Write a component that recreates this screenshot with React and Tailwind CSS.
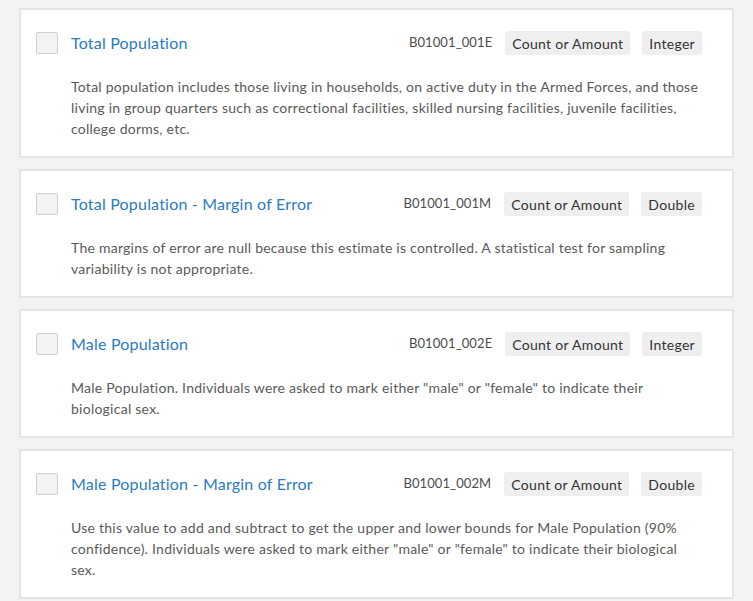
import React from 'react';

const fields = [
  {
    title: 'Total Population',
    id: 'B01001_001E',
    type: 'Integer',
    desc: 'Total population includes those living in households, on active duty in the Armed Forces, and those living in group quarters such as correctional facilities, skilled nursing facilities, juvenile facilities, college dorms, etc.',
  },
  {
    title: 'Total Population - Margin of Error',
    id: 'B01001_001M',
    type: 'Double',
    desc: 'The margins of error are null because this estimate is controlled. A statistical test for sampling variability is not appropriate.',
  },
  {
    title: 'Male Population',
    id: 'B01001_002E',
    type: 'Integer',
    desc: 'Male Population. Individuals were asked to mark either "male" or "female" to indicate their biological sex.',
  },
  {
    title: 'Male Population - Margin of Error',
    id: 'B01001_002M',
    type: 'Double',
    desc: 'Use this value to add and subtract to get the upper and lower bounds for Male Population (90% confidence). Individuals were asked to mark either "male" or "female" to indicate their biological sex.',
  },
];

const FieldCard = ({ field }) => {
  return (
    <div className="bg-white border-2 border-[#e4e4e4] pl-[15px] pr-[30px] pt-[21px] pb-[17px]">
      <div className="flex items-center">
        <div className="w-[22px] h-[22px] shrink-0 rounded-[2px] border border-[#cfcfcf] bg-[#f3f3f3]" />
        <div className="ml-[13px] flex-1 text-[16px] tracking-[0.2px] text-[#2c7bc2]">{field.title}</div>
        <div className="text-[13px] text-[#4c4c4c] tracking-[0.1px]">{field.id}</div>
        <div className="ml-[13px] h-[24px] px-[7px] flex items-center rounded-[3px] bg-[#efefef] text-[14px] tracking-[0.3px] text-[#333]">
          Count or Amount
        </div>
        <div className="ml-[12px] h-[24px] px-[7px] flex items-center rounded-[3px] bg-[#efefef] text-[14px] tracking-[0.3px] text-[#333]">
          {field.type}
        </div>
      </div>
      <p className="mt-[21px] ml-[35px] pr-[2px] text-[14px] leading-[21px] tracking-[0.25px] text-[#5a5a5a]">{field.desc}</p>
    </div>
  );
};

export default function App() {
  return (
    <div className="min-h-screen bg-[#f3f3f3] px-[19px] pt-[8px] font-['Lato',sans-serif]">
      <div className="flex flex-col gap-[11px]">
        {fields.map((f) => (
          <FieldCard key={f.id} field={f} />
        ))}
      </div>
    </div>
  );
}
